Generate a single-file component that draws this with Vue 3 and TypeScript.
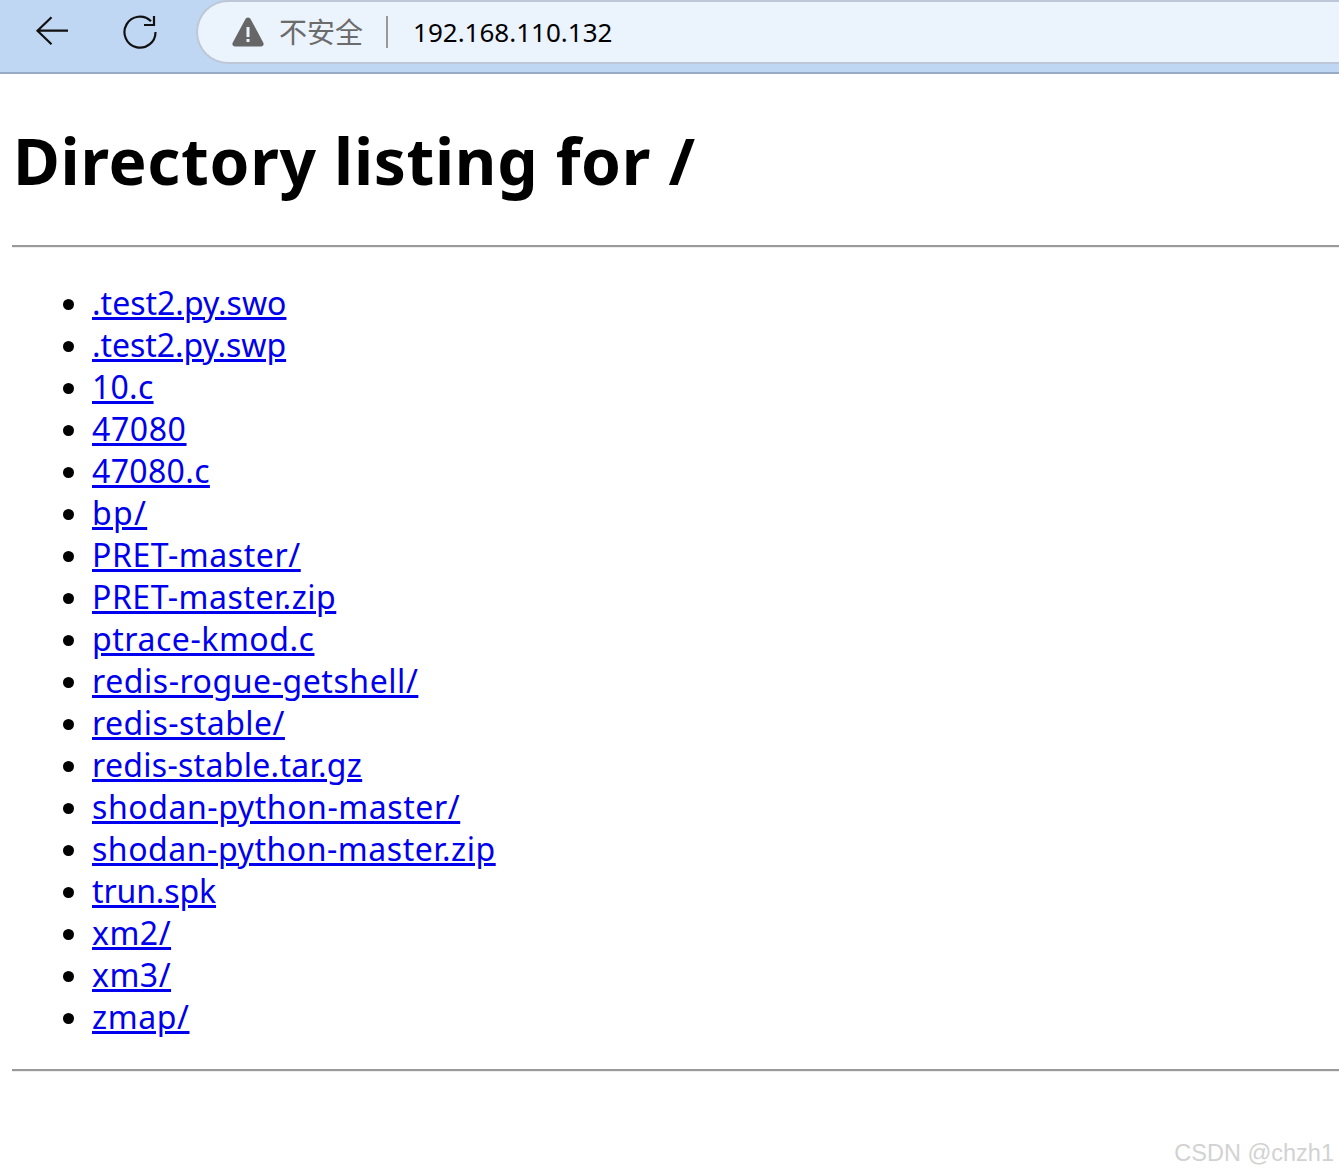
<template>
  <div class="page">
    <header class="toolbar">
      <button class="tool-btn back" aria-label="back">
        <svg width="36" height="32" viewBox="0 0 36 32" fill="none" stroke="#111" stroke-width="2.2">
          <path d="M34 14.700H3M17.500 1.200 3.500 14.700 17.500 28.200" />
        </svg>
      </button>
      <button class="tool-btn reload" aria-label="reload">
        <svg width="36" height="36" viewBox="0 0 36 36" fill="none" stroke="#111" stroke-width="2.200">
          <path d="M29 7.200A15.500 15.500 0 1 0 33.500 18" />
          <path d="M22 11H32V2" />
        </svg>
      </button>
      <div class="omnibox">
        <svg class="warn" width="32" height="30" viewBox="0 0 32 30">
          <path d="M16 .5c1.200 0 2.100.7 2.800 1.900l12.400 23c1.100 2.100-.1 4.100-2.300 4.100H3.100C.9 29.500-.3 27.500.8 25.400l12.400-23C13.900 1.200 14.800.5 16 .5z" fill="#666" />
          <rect x="14.500" y="10" width="3" height="10" fill="#ebf3fd" />
          <rect x="14.500" y="22" width="3" height="3" fill="#ebf3fd" />
        </svg>
        <span class="insecure">不安全</span>
        <span class="divider"></span>
        <span class="url">192.168.110.132</span>
      </div>
    </header>

    <main class="content">
      <h1>Directory listing for /</h1>
      <hr />
      <ul>
        <li v-for="file in files" :key="file.name">
          <a href="#" :style="{ letterSpacing: file.track + 'px' }">{{ file.name }}</a>
        </li>
      </ul>
      <hr />
    </main>

    <span class="watermark">CSDN @chzh1</span>
  </div>
</template>

<script setup lang="ts">
// track: per-name tweak so line widths stay close to the original font
const files: { name: string; track: number }[] = [
  { name: '.test2.py.swo', track: 0 },
  { name: '.test2.py.swp', track: -0.05 },
  { name: '10.c', track: 0.25 },
  { name: '47080', track: 0.6 },
  { name: '47080.c', track: 0.35 },
  { name: 'bp/', track: 1.3 },
  { name: 'PRET-master/', track: 0.58 },
  { name: 'PRET-master.zip', track: 0.53 },
  { name: 'ptrace-kmod.c', track: 0.54 },
  { name: 'redis-rogue-getshell/', track: 0.55 },
  { name: 'redis-stable/', track: 0.46 },
  { name: 'redis-stable.tar.gz', track: 0.3 },
  { name: 'shodan-python-master/', track: 0.57 },
  { name: 'shodan-python-master.zip', track: 0.54 },
  { name: 'trun.spk', track: -0.12 },
  { name: 'xm2/', track: 0.5 },
  { name: 'xm3/', track: 0.5 },
  { name: 'zmap/', track: 0.6 }
]
</script>

<style>
html,
body {
  margin: 0;
  background: #fff;
  overflow: hidden;
}
</style>

<style scoped>
.page {
  position: relative;
  height: 1175px;
  overflow: hidden;
  font-family: "Noto Sans", "Noto Sans CJK SC", sans-serif;
  color: #000;
}

.toolbar {
  display: flex;
  align-items: flex-start;
  height: 72px;
  box-sizing: content-box;
  border-bottom: 2px solid #99aac6;
  background: #c0d7f3;
}
.tool-btn {
  display: flex;
  align-items: center;
  justify-content: center;
  padding: 0;
  border: none;
  background: none;
  flex: none;
}
.back {
  width: 36px;
  height: 32px;
  margin: 16px 0 0 34px;
}
.reload {
  width: 36px;
  height: 36px;
  margin: 14px 0 0 52px;
}
.omnibox {
  flex: 1;
  display: flex;
  align-items: center;
  height: 60px;
  margin-left: 38px;
  padding-left: 34px;
  background: #ebf3fd;
  border: 2px solid #bcc8d8;
  border-right: none;
  border-top-left-radius: 32px;
  border-bottom-left-radius: 32px;
}
.warn {
  flex: none;
}
.insecure {
  margin-left: 15px;
  font-size: 28px;
  line-height: 36px;
  color: #6b6b6b;
}
.divider {
  width: 2px;
  height: 32px;
  margin-left: 23px;
  background: #999;
}
.url {
  margin-left: 25px;
  font-size: 26px;
  line-height: 36px;
  color: #000;
}

.content {
  padding-left: 12px;
  margin-right: -12px;
}
h1 {
  margin: 0;
  padding: 43px 0 1px 1px;
  font-size: 64px;
  line-height: 88px;
  font-weight: 700;
  letter-spacing: 0.7px;
}
hr {
  height: 2px;
  margin: 39px 0 0;
  border: none;
  border-bottom: 1px solid #eee;
  box-sizing: content-box;
  background: #9a9a9a;
}
ul {
  margin: 34px 0 31px;
  padding: 0 0 0 80px;
}
li {
  font-size: 32px;
  line-height: 42px;
}
a {
  color: #0000ee;
  text-decoration: underline;
  text-decoration-thickness: 3px;
}
ul + hr {
  margin-top: 0;
}

.watermark {
  position: absolute;
  right: 5px;
  top: 1140px;
  font-family: "Liberation Sans", sans-serif;
  font-size: 23.5px;
  color: #d2d2d2;
}
</style>
